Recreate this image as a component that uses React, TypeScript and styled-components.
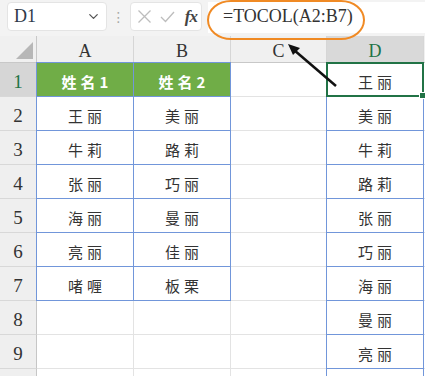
import React from 'react'
import styled, { createGlobalStyle } from 'styled-components'
import { ChevronDown } from 'lucide-react'

const GlobalStyle = createGlobalStyle`
  body {
    margin: 0;
    background: #fff;
  }
`

const Sheet = styled.div`
  position: relative;
  width: 425px;
  height: 376px;
  overflow: hidden;
  background: #fff;
  font-family: 'Liberation Serif', 'Noto Sans CJK SC', serif;
  color: #333;
`

const TopBar = styled.div`
  display: flex;
  align-items: flex-start;
  height: 36px;
  box-sizing: border-box;
  padding: 2px 0 0 7px;
  background: #f3f3f3;
`

const NameBox = styled.div`
  display: flex;
  align-items: center;
  justify-content: space-between;
  width: 100px;
  height: 29px;
  box-sizing: border-box;
  padding: 0 5px 0 6px;
  background: #fff;
  border: 1px solid #e4e4e4;
  border-radius: 4px;
  font-size: 18px;
  color: #2f3a4a;
`

const Dots = styled.div`
  width: 23px;
  height: 29px;
  display: flex;
  align-items: center;
  justify-content: center;
  color: #a8a8a8;
  font-size: 14px;
  font-family: 'DejaVu Sans', sans-serif;
`

const FxBox = styled.div`
  display: flex;
  align-items: center;
  gap: 8px;
  width: 72px;
  height: 29px;
  box-sizing: border-box;
  padding: 0 4px 0 6px;
  background: #fff;
  border: 1px solid #e4e4e4;
  border-radius: 4px;
`

const Fx = styled.span`
  margin-left: auto;
  font-style: italic;
  font-weight: bold;
  font-size: 17px;
  color: #444;
  letter-spacing: -1px;
`

const FormulaBox = styled.div`
  flex: 1;
  height: 31px;
  margin-left: 6px;
  box-sizing: border-box;
  padding: 4px 0 0 15px;
  background: #fff;
  font-size: 18px;
  color: #333;
  white-space: nowrap;
`

const Ring = styled.div`
  position: absolute;
  left: 207px;
  top: 0;
  width: 158px;
  height: 40px;
  box-sizing: border-box;
  border: 2.5px solid #f08a24;
  border-radius: 24px / 20px;
  z-index: 3;
  pointer-events: none;
`

const Grid = styled.div`
  display: grid;
  grid-template-columns: 37px 97px 97px 96px 97px 1fr;
  grid-template-rows: 27px repeat(10, 34px);
`

const Corner = styled.div`
  display: flex;
  align-items: flex-end;
  justify-content: flex-end;
  padding: 0 3px 3px 0;
  background: #f0f0f0;
  border-right: 1px solid #c8c8c8;
  border-bottom: 1px solid #c8c8c8;
`

const ColHeader = styled.div<{ active?: boolean }>`
  display: flex;
  align-items: center;
  justify-content: center;
  padding-top: 4px;
  box-sizing: border-box;
  background: ${({ active }) => (active ? '#d9d9d9' : '#f0f0f0')};
  border-right: 1px solid #d6d6d6;
  border-bottom: 1px solid #c8c8c8;
  font-size: 18px;
  color: ${({ active }) => (active ? '#217346' : '#333')};
`

const RowHeader = styled.div<{ active?: boolean }>`
  display: flex;
  align-items: flex-end;
  justify-content: center;
  padding-bottom: 3px;
  box-sizing: border-box;
  background: ${({ active }) => (active ? '#d6d6d6' : '#efefef')};
  border-right: 1px solid #c6c6c6;
  border-bottom: 1px solid #d8d8d8;
  font-size: 19px;
  color: ${({ active }) => (active ? '#217346' : '#333')};
`

const Cell = styled.div<{ boxed?: boolean; fill?: boolean; selected?: boolean }>`
  position: relative;
  display: flex;
  align-items: center;
  justify-content: center;
  padding-top: 3px;
  padding-left: 4px;
  box-sizing: border-box;
  border-right: 1px solid #e3e3e3;
  border-bottom: 1px solid #e3e3e3;
  background: ${({ fill }) => (fill ? '#70ad47' : '#fff')};
  color: ${({ fill }) => (fill ? '#fff' : '#333')};
  font-family: 'Noto Sans CJK SC', sans-serif;
  font-weight: ${({ fill }) => (fill ? 700 : 400)};
  font-size: 15px;
  letter-spacing: 4px;

  ${({ boxed }) =>
    boxed
      ? `
    &::after {
      content: '';
      position: absolute;
      inset: -1px;
      border: 1px solid #7196da;
      pointer-events: none;
      z-index: 1;
    }
  `
      : ''}

  ${({ selected }) =>
    selected
      ? `
    &::after {
      content: '';
      position: absolute;
      inset: -1px;
      border: 2px solid #217346;
      pointer-events: none;
      z-index: 2;
    }
    &::before {
      content: '';
      position: absolute;
      right: -3px;
      bottom: -3px;
      width: 5px;
      height: 5px;
      background: #217346;
      border: 1px solid #fff;
      z-index: 3;
    }
  `
      : ''}
`

const Overlay = styled.svg`
  position: absolute;
  left: 0;
  top: 0;
  z-index: 4;
  pointer-events: none;
`

const colA = ['姓名1', '王丽', '牛莉', '张丽', '海丽', '亮丽', '啫喱']
const colB = ['姓名2', '美丽', '路莉', '巧丽', '曼丽', '佳丽', '板栗']
const colD = ['王丽', '美丽', '牛莉', '路莉', '张丽', '巧丽', '海丽', '曼丽', '亮丽']

const rows = Array.from({ length: 10 }, (_, i) => i)

export default function App() {
  return (
    <>
      <GlobalStyle />
      <Sheet>
        <TopBar>
          <NameBox>
            <span>D1</span>
            <ChevronDown size={15} strokeWidth={2} color="#555" />
          </NameBox>
          <Dots>⋮</Dots>
          <FxBox>
            <svg width="15" height="15" viewBox="0 0 15 15">
              <path d="M1.5 1.5 L13.5 13.5 M13.5 1.5 L1.5 13.5" stroke="#bdbdbd" strokeWidth="1.3" fill="none" />
            </svg>
            <svg width="15" height="15" viewBox="0 0 15 15">
              <path d="M1 8 L5.5 12.5 L14 3" stroke="#bdbdbd" strokeWidth="1.3" fill="none" />
            </svg>
            <Fx>fx</Fx>
          </FxBox>
          <FormulaBox>=TOCOL(A2:B7)</FormulaBox>
        </TopBar>
        <Ring />
        <Grid>
          <Corner>
            <svg width="17" height="17" viewBox="0 0 17 17">
              <polygon points="17,0 17,17 0,17" fill="#b7b7b7" />
            </svg>
          </Corner>
          <ColHeader>A</ColHeader>
          <ColHeader>B</ColHeader>
          <ColHeader>C</ColHeader>
          <ColHeader active>D</ColHeader>
          <ColHeader />
          {rows.map((r) => (
            <React.Fragment key={r}>
              <RowHeader active={r === 0}>{r < 9 ? r + 1 : ''}</RowHeader>
              <Cell boxed={r < 7} fill={r === 0}>
                {colA[r]}
              </Cell>
              <Cell boxed={r < 7} fill={r === 0}>
                {colB[r]}
              </Cell>
              <Cell />
              <Cell boxed={r > 0} selected={r === 0}>
                {colD[r]}
              </Cell>
              <Cell />
            </React.Fragment>
          ))}
        </Grid>
        <Overlay width="425" height="376" viewBox="0 0 425 376">
          <line x1="336" y1="86" x2="294" y2="50" stroke="#111" strokeWidth="2.5" />
          <polygon points="288,44 300,48 293,55" fill="#111" />
        </Overlay>
      </Sheet>
    </>
  )
}
